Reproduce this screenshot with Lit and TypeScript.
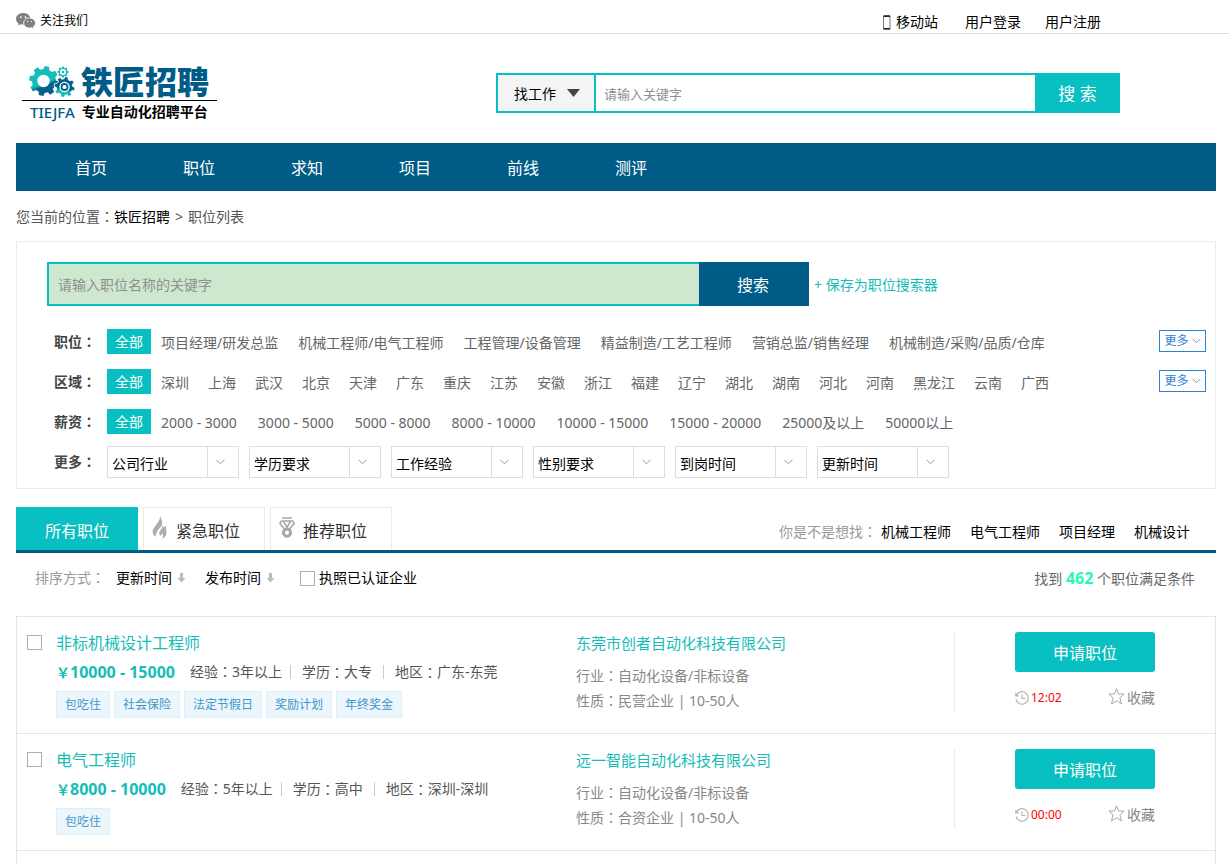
import { LitElement, html, css, svg } from "lit";
import { customElement, property } from "lit/decorators.js";

interface Job {
  title: string;
  salary: string;
  years: string;
  degree: string;
  area: string;
  tags: string[];
  company: string;
  industry: string;
  nature: string;
  time: string;
}

const NAV = ["首页", "职位", "求知", "项目", "前线", "测评"];

const FILTERS = [
  {
    label: "职位",
    kind: "roles",
    more: true,
    items: ["项目经理/研发总监", "机械工程师/电气工程师", "工程管理/设备管理", "精益制造/工艺工程师", "营销总监/销售经理", "机械制造/采购/品质/仓库"],
  },
  {
    label: "区域",
    kind: "areas",
    more: true,
    items: ["深圳", "上海", "武汉", "北京", "天津", "广东", "重庆", "江苏", "安徽", "浙江", "福建", "辽宁", "湖北", "湖南", "河北", "河南", "黑龙江", "云南", "广西"],
  },
  {
    label: "薪资",
    kind: "pay",
    more: false,
    items: ["2000 - 3000", "3000 - 5000", "5000 - 8000", "8000 - 10000", "10000 - 15000", "15000 - 20000", "25000及以上", "50000以上"],
  },
];

const SELECTS = ["公司行业", "学历要求", "工作经验", "性别要求", "到岗时间", "更新时间"];
const SUGGESTIONS = ["机械工程师", "电气工程师", "项目经理", "机械设计"];

const JOBS: Job[] = [
  {
    title: "非标机械设计工程师",
    salary: "10000 - 15000",
    years: "3年以上",
    degree: "大专",
    area: "广东-东莞",
    tags: ["包吃住", "社会保险", "法定节假日", "奖励计划", "年终奖金"],
    company: "东莞市创者自动化科技有限公司",
    industry: "自动化设备/非标设备",
    nature: "民营企业 | 10-50人",
    time: "12:02",
  },
  {
    title: "电气工程师",
    salary: "8000 - 10000",
    years: "5年以上",
    degree: "高中",
    area: "深圳-深圳",
    tags: ["包吃住"],
    company: "远一智能自动化科技有限公司",
    industry: "自动化设备/非标设备",
    nature: "合资企业 | 10-50人",
    time: "00:00",
  },
];

const shared = css`
  * {
    box-sizing: border-box;
  }
  a {
    color: inherit;
    text-decoration: none;
  }
  button,
  input,
  select {
    font: inherit;
    margin: 0;
    padding: 0;
    border: 0;
    border-radius: 0;
    outline: 0;
  }
  button {
    cursor: pointer;
  }
  svg {
    display: block;
    flex: none;
  }
  .colon {
    font-family: "Noto Sans CJK TC", sans-serif;
    line-height: 1;
  }
  .check {
    appearance: none;
    flex: none;
    width: 15px;
    height: 15px;
    border: 1px solid #adadad;
    background: #fff;
  }
  .check:checked {
    background: #08bfc1;
  }
`;

// The full-width colon sits in the middle of its box.
const colon = html`<span class="colon">：</span>`;

const chevron = html`<svg class="chevron" width="9" height="6" viewBox="0 0 9 6" fill="none" stroke="#999">
  <path d="M.5 .8 4.5 4.8 8.5 .8" />
</svg>`;

// Cog outline made of evenly spaced trapezoid teeth around a centre.
function cog(cx: number, cy: number, outer: number, inner: number, teeth: number, turn: number): string {
  const step = (Math.PI * 2) / teeth;
  const points: string[] = [];
  for (let i = 0; i < teeth; i++) {
    for (const [offset, radius] of [[-0.32, inner], [-0.2, outer], [0.2, outer], [0.32, inner]]) {
      const angle = turn + (i + offset) * step;
      points.push(`${(cx + Math.cos(angle) * radius).toFixed(2)},${(cy + Math.sin(angle) * radius).toFixed(2)}`);
    }
  }
  return points.join(" ");
}

const gears = html`<svg width="46" height="34" viewBox="0 0 46 34" aria-hidden="true">
  <defs>
    <linearGradient id="big" x1="0.3" y1="0" x2="0.7" y2="1">
      <stop offset="0.56" stop-color="#16bcb8" />
      <stop offset="0.66" stop-color="#07608b" />
    </linearGradient>
    <linearGradient id="mid" x1="0.6" y1="0" x2="0.4" y2="1">
      <stop offset="0.58" stop-color="#07608b" />
      <stop offset="0.7" stop-color="#16bcb8" />
    </linearGradient>
  </defs>
  ${svg`<polygon points=${cog(15, 16, 15, 12, 8, 0.2)} fill="url(#big)" />`}
  <circle cx="14.500" cy="16" r="6.200" fill="#fff" />
  ${svg`<polygon points=${cog(35.5, 22, 10.5, 8.2, 8, 0.2)} fill="url(#mid)" stroke="#fff" stroke-width=".8" />`}
  <circle cx="35.500" cy="22" r="5.200" fill="#fff" />
  <circle cx="35.500" cy="22" r="3" fill="none" stroke="#07608b" stroke-width="1.800" />
  ${svg`<polygon points=${cog(34, 7, 5.6, 4.4, 8, 0)} fill="#16bcb8" />`}
  <circle cx="34" cy="7" r="3" fill="#fff" />
  <circle cx="34" cy="7" r="1.300" fill="#16bcb8" />
</svg>`;

const wechat = html`<svg width="20" height="16" viewBox="0 0 20 16" aria-hidden="true">
  <path fill="#808080" d="M7.2 0C3.2 0 0 2.6 0 5.9c0 1.8 1 3.4 2.500 4.500L1.900 12.600l2.600-1.400c.9.300 1.700.4 2.700.4 4 0 7.200-2.600 7.200-5.800S11.200 0 7.200 0z" />
  <path fill="#808080" stroke="#fff" stroke-width=".8" d="M13.600 5c-3.300 0-6 2.200-6 5s2.700 5 6 5c.7 0 1.400-.1 2.100-.3l2.100 1.200-.6-1.900c1.400-.9 2.300-2.400 2.300-4 0-2.800-2.600-5-5.900-5z" />
  <circle cx="4.800" cy="4.200" r=".9" fill="#fff" />
  <circle cx="9.500" cy="4.200" r=".9" fill="#fff" />
  <circle cx="11.700" cy="8.600" r=".7" fill="#fff" />
  <circle cx="15.500" cy="8.600" r=".7" fill="#fff" />
</svg>`;

const phone = html`<svg width="9" height="15" viewBox="0 0 9 15" aria-hidden="true">
  <rect x="1.500" y=".6" width="6.500" height="13.800" rx=".6" fill="#fff" stroke="#777" />
  <path d="M1.500 1.200H8M1.500 13.600H8" stroke="#222" stroke-width="1.400" />
</svg>`;

const flame = html`<svg width="16" height="24" viewBox="0 0 16 24" aria-hidden="true">
  <path fill="#b0acab" d="M8 0c.4 3.200-1.600 6-4.200 9.200C1.300 12.200.2 14.600.8 17c.4 1.800 1.600 3 3.200 3.800-.3-3.600 1-6.200 4.400-9.200C10.300 9.800 10.700 7 9.900 4.600 9.400 3 8.600 1.600 8 0z" />
  <path fill="#b0acab" d="M10.600 9.500c.4 3-3.600 4.800-3.300 8.300.1 1 .5 1.500 1.200 1.600 1 .1 1.500-.8 1.600-2.400 1.400 1.900 1.200 4-.7 6 3.600-1.200 5.300-3.800 5.200-7-.1-2.700-1-4.200-.6-6.600-1.200.5-1.800 1.300-2 2.400-.2-1-.6-1.700-1.400-2.300z" />
</svg>`;

const medal = html`<svg width="16" height="21" viewBox="0 0 16 21" fill="none" stroke="#aaa7a5" aria-hidden="true">
  <path stroke-width="1.400" d="M3 1h10M2 4h12" />
  <path stroke-width="1.600" d="M2.200 4 .9 6.600l4.700 5.600M13.800 4l1.300 2.600-4.700 5.600M4.600 4.500 8 10.500l3.400-6" />
  <circle cx="8" cy="15.600" r="3.600" stroke-width="3" />
  <path stroke="#fff" d="M8 13.800v3.600" />
</svg>`;

const downArrow = html`<svg width="9" height="10" viewBox="0 0 9 10" aria-hidden="true">
  <path fill="#bbb" d="M3 0h3v5h2.500L4.500 9.500.5 5H3z" />
</svg>`;

const clock = html`<svg width="14" height="14" viewBox="0 0 14 14" fill="none" stroke="#b5b5b5" stroke-width="1.200" aria-hidden="true">
  <path d="M1.300 4.500A6.200 6.200 0 1 1 1 8.500M.8 1.800v3.100h3M7 3.500v4h3.500" />
</svg>`;

const star = html`<svg width="17" height="17" viewBox="0 0 17 17" fill="none" stroke="#aaa" aria-hidden="true">
  <path stroke-linejoin="round" d="M8.500 .8 10.500 6h5.600l-4.200 3.800 1.600 6.200-5-3.300-5 3.300 1.600-6.200L.9 6h5.600z" />
</svg>`;

@customElement("job-item")
export class JobItem extends LitElement {
  @property({ attribute: false }) job!: Job;

  static styles = [
    shared,
    css`
      :host {
        display: grid;
        grid-template-columns: 39px minmax(0, 520fr) minmax(0, 378fr) 261px;
        min-height: 117px;
        padding: 15px 0 14px;
        border-bottom: 1px solid #e5e5e5;
      }
      .pick {
        padding: 3px 0 0 10px;
      }
      .pick .check {
        display: block;
      }
      .title {
        display: block;
        font-size: 16px;
        line-height: 22px;
        color: #14bdb8;
      }
      .facts {
        display: flex;
        align-items: center;
        height: 24px;
        margin-top: 6px;
        color: #555;
        white-space: nowrap;
      }
      .salary {
        margin-right: 15px;
        color: #14bdb8;
        font-weight: 700;
        font-size: 16px;
      }
      .yen {
        font-size: 14px;
      }
      .fact + .fact {
        display: flex;
        align-items: center;
      }
      .fact + .fact::before {
        content: "";
        width: 1px;
        height: 14px;
        margin: 0 11px;
        background: #ccc;
      }
      .fact:nth-child(3)::before {
        margin-left: 8px;
      }
      .tags {
        display: flex;
        flex-wrap: wrap;
        gap: 4px;
        margin: 7px 0 0;
        padding: 0;
        list-style: none;
      }
      .tag {
        padding: 0 8px;
        border: 1px solid #dfeff8;
        background: #ecf6fd;
        color: #3f97c9;
        font-size: 12px;
        line-height: 25px;
      }
      .company {
        display: block;
        margin-bottom: 9px;
        font-size: 15px;
        line-height: 22px;
        color: #14bdb8;
      }
      .line {
        margin: 0;
        line-height: 25px;
        color: #888;
      }
      .actions {
        height: 80px;
        padding: 0 60px;
        border-left: 1px solid #ebebeb;
      }
      .apply {
        display: block;
        width: 100%;
        height: 40px;
        padding-top: 2px;
        border-radius: 3px;
        background: #08bfc1;
        color: #fff;
        font-size: 16px;
      }
      .meta {
        display: flex;
        justify-content: space-between;
        align-items: center;
        height: 20px;
        margin-top: 16px;
      }
      .when,
      .save {
        display: flex;
        align-items: center;
        gap: 2px;
      }
      .when {
        color: #f00;
        font-size: 12px;
      }
      .save {
        background: none;
        color: #888;
      }
      .save svg {
        margin-bottom: 4px;
      }
    `,
  ];

  render() {
    const j = this.job;
    return html`
      <div class="pick"><input class="check" type="checkbox" aria-label=${j.title} /></div>
      <div>
        <a class="title" href="#">${j.title}</a>
        <div class="facts">
          <span class="salary"><span class="yen">￥</span>${j.salary}</span>
          <span class="fact">经验${colon}${j.years}</span>
          <span class="fact">学历${colon}${j.degree}</span>
          <span class="fact">地区${colon}${j.area}</span>
        </div>
        <ul class="tags">
          ${j.tags.map((t) => html`<li class="tag">${t}</li>`)}
        </ul>
      </div>
      <div>
        <a class="company" href="#">${j.company}</a>
        <p class="line">行业${colon}${j.industry}</p>
        <p class="line">性质${colon}${j.nature}</p>
      </div>
      <div class="actions">
        <button class="apply" type="button">申请职位</button>
        <div class="meta">
          <span class="when">${clock}<span>${j.time}</span></span>
          <button class="save" type="button">${star}<span>收藏</span></button>
        </div>
      </div>
    `;
  }
}

@customElement("app-root")
export class AppRoot extends LitElement {
  static styles = [
    shared,
    css`
      :host {
        display: block;
        background: #fff;
        color: #000;
        font-family: "Noto Sans", "Noto Sans CJK SC", sans-serif;
        font-size: 14px;
        line-height: 20px;
      }
      .topbar {
        display: flex;
        justify-content: space-between;
        height: 34px;
        padding: 10px 128px 0 16px;
        border-bottom: 1px solid #ddd;
      }
      .follow {
        display: flex;
        align-items: center;
        gap: 4px;
        height: 22px;
        font-size: 12px;
      }
      .account {
        display: flex;
        align-items: center;
        height: 24px;
        gap: 24px;
      }
      .mobile {
        display: flex;
        align-items: center;
        gap: 5px;
        margin-right: 3px;
      }
      .wrap {
        padding: 0 13px 0 16px;
      }
      .header {
        display: flex;
        justify-content: space-between;
        align-items: flex-start;
        height: 109px;
        padding: 0 96px 0 6px;
      }
      .logo {
        width: 195px;
        padding-top: 30px;
      }
      .brand {
        display: flex;
        align-items: center;
        gap: 6px;
        height: 37px;
        padding-left: 7px;
        border-bottom: 1px solid #000;
        color: #005c87;
        font-size: 32px;
        font-weight: 900;
        line-height: 36px;
        white-space: nowrap;
      }
      .slogan {
        display: flex;
        align-items: center;
        gap: 7px;
        height: 22px;
        padding-left: 8px;
        font-weight: 700;
        white-space: nowrap;
      }
      .latin {
        color: #005c87;
        font-size: 15px;
        font-weight: 500;
      }
      .site-search {
        display: flex;
        flex: 0 1 624px;
        height: 40px;
        margin-top: 39px;
        border: 2px solid #08bfc1;
        border-right: 0;
      }
      .kind {
        display: grid;
        align-items: center;
        width: 98px;
        border-right: 2px solid #08bfc1;
        background: #f4f4f4;
      }
      .kind select {
        grid-area: 1 / 1;
        appearance: none;
        width: 100%;
        height: 100%;
        padding: 1px 0 0 16px;
        background: none;
        color: #000;
      }
      .kind svg {
        grid-area: 1 / 1;
        justify-self: end;
        margin-right: 14px;
        pointer-events: none;
      }
      .site-search input {
        flex: 1;
        min-width: 0;
        padding: 1px 8px 0;
        font-size: 13px;
      }
      ::placeholder {
        color: #8f8f8f;
        opacity: 1;
      }
      .go {
        width: 85px;
        margin: -2px 0;
        padding-top: 2px;
        background: #08bfc1;
        color: #fff;
        font-size: 17px;
      }
      .nav {
        display: flex;
        padding-left: 21px;
        background: #005c87;
        color: #fff;
        font-size: 16px;
        line-height: 48px;
      }
      .nav a {
        width: 108px;
        padding-top: 1px;
        height: 48px;
        text-align: center;
      }
      .crumbs {
        display: flex;
        height: 50px;
        padding-top: 16px;
        color: #555;
      }
      .crumbs a {
        color: #000;
      }
      .crumbs .sep {
        padding: 0 5px;
      }
      .filters {
        padding: 20px 9px 6px 30px;
        border: 1px solid #ebebeb;
      }
      .job-search {
        display: flex;
        align-items: center;
        margin-bottom: 16px;
      }
      .job-search input {
        flex: 0 1 652px;
        min-width: 0;
        height: 44px;
        padding: 0 9px;
        border: 2px solid #08bfc1;
        border-right: 0;
        background: #cde8cf;
      }
      .job-search button {
        width: 110px;
        height: 44px;
        padding: 2px 2px 0 0;
        background: #005c87;
        color: #fff;
        font-size: 16px;
      }
      .job-search a {
        margin-left: 5px;
        padding-top: 2px;
        color: #14bdb8;
      }
      .row {
        display: flex;
        align-items: center;
        height: 40px;
        padding-left: 7px;
      }
      .label {
        width: 53px;
        color: #444;
        font-weight: 700;
      }
      .all {
        margin: 0 10px 1px 0;
        padding: 1px 8px 0;
        background: #08bfc1;
        color: #fff;
        line-height: 24px;
      }
      .options {
        display: flex;
        flex: 1;
        padding-top: 1px;
        color: #666;
        white-space: nowrap;
      }
      .options.roles {
        gap: 20px;
      }
      .options.areas {
        gap: 19px;
      }
      .options.pay {
        gap: 21px;
      }
      .more {
        display: flex;
        align-items: center;
        justify-content: center;
        gap: 3px;
        width: 47px;
        height: 22px;
        margin-bottom: 2px;
        border: 1px solid #2e80d5;
        background: #fff;
        color: #2e80d5;
        font-size: 12px;
      }
      .selects {
        display: flex;
        gap: 10px;
      }
      .drop {
        display: grid;
        grid-template-columns: 1fr 31px;
        align-items: center;
        width: 132px;
        height: 32px;
        border: 1px solid #ddd;
      }
      .drop select {
        grid-area: 1 / 1 / 2 / 3;
        appearance: none;
        height: 30px;
        padding: 3px 0 0 4px;
        background: none;
        color: #000;
      }
      .arrow {
        grid-area: 1 / 2;
        display: grid;
        place-items: center start;
        height: 30px;
        padding-left: 8px;
        border-left: 1px solid #ddd;
        pointer-events: none;
      }
      .tabs {
        display: flex;
        gap: 5px;
        margin-top: 18px;
        border-bottom: 3px solid #005c87;
      }
      .tab {
        display: flex;
        align-items: center;
        gap: 8px;
        width: 122px;
        height: 43px;
        padding: 0 8px;
        border: 1px solid #ebebeb;
        border-bottom: 0;
        background: #fff;
        color: #333;
        font-size: 16px;
        white-space: nowrap;
      }
      .tab span {
        padding-top: 4px;
      }
      .tab svg {
        margin-bottom: 3px;
      }
      .tab.on {
        justify-content: center;
        border-color: #08bfc1;
        background: #08bfc1;
        color: #fff;
      }
      .hints {
        display: flex;
        gap: 19px;
        align-items: center;
        margin-left: auto;
        padding: 6px 26px 0 0;
      }
      .hints .ask {
        margin-right: -15px;
        color: #999;
      }
      .sort {
        display: flex;
        align-items: center;
        height: 50px;
        padding: 0 21px 0 19px;
      }
      .sort .by {
        margin-right: 11px;
        color: #999;
      }
      .order {
        display: flex;
        align-items: center;
        gap: 5px;
        margin-right: 19px;
        background: none;
        color: #000;
      }
      .licensed {
        display: flex;
        align-items: center;
        gap: 4px;
        margin-left: 6px;
      }
      .found {
        margin-left: auto;
        color: #666;
      }
      .found strong {
        color: #2cf5b8;
        font-size: 16px;
      }
      .list {
        margin-top: 13px;
        padding-bottom: 12px;
        border: 1px solid #e5e5e5;
        border-bottom: 0;
      }
    `,
  ];

  render() {
    return html`
      <div class="topbar">
        <a class="follow" href="#">${wechat}<span>关注我们</span></a>
        <div class="account">
          <a class="mobile" href="#">${phone}<span>移动站</span></a>
          <a href="#">用户登录</a>
          <a href="#">用户注册</a>
        </div>
      </div>
      <div class="wrap">
        <header class="header">
          <a class="logo" href="#">
            <div class="brand">${gears}<span>铁匠招聘</span></div>
            <div class="slogan"><span class="latin">TIEJFA</span><span>专业自动化招聘平台</span></div>
          </a>
          <form class="site-search" @submit=${(e: Event) => e.preventDefault()}>
            <div class="kind">
              <select aria-label="搜索类型">
                <option>找工作</option>
                <option>找人才</option>
              </select>
              <svg width="13" height="8" viewBox="0 0 13 8"><path fill="#444" d="M0 0h13L6.500 8z" /></svg>
            </div>
            <input type="text" placeholder="请输入关键字" aria-label="请输入关键字" />
            <button class="go">搜 索</button>
          </form>
        </header>

        <nav class="nav">${NAV.map((n) => html`<a href="#">${n}</a>`)}</nav>

        <div class="crumbs">
          <span>您当前的位置${colon}</span><a href="#">铁匠招聘</a><span class="sep">&gt;</span><span>职位列表</span>
        </div>

        <section class="filters">
          <form class="job-search" @submit=${(e: Event) => e.preventDefault()}>
            <input type="text" placeholder="请输入职位名称的关键字" aria-label="职位名称" />
            <button>搜索</button>
            <a href="#">+ 保存为职位搜索器</a>
          </form>
          ${FILTERS.map(
            (f) => html`<div class="row">
              <span class="label">${f.label}${colon}</span>
              <a class="all" href="#">全部</a>
              <div class="options ${f.kind}">${f.items.map((i) => html`<a href="#">${i}</a>`)}</div>
              ${f.more ? html`<button class="more" type="button"><span>更多</span>${chevron}</button>` : ""}
            </div>`
          )}
          <div class="row">
            <span class="label">更多${colon}</span>
            <div class="selects">
              ${SELECTS.map(
                (s) => html`<div class="drop">
                  <select aria-label=${s}>
                    <option>${s}</option>
                  </select>
                  <span class="arrow">${chevron}</span>
                </div>`
              )}
            </div>
          </div>
        </section>

        <div class="tabs">
          <button class="tab on" type="button"><span>所有职位</span></button>
          <button class="tab" type="button">${flame}<span>紧急职位</span></button>
          <button class="tab" type="button">${medal}<span>推荐职位</span></button>
          <div class="hints">
            <span class="ask">你是不是想找${colon}</span>
            ${SUGGESTIONS.map((s) => html`<a href="#">${s}</a>`)}
          </div>
        </div>

        <div class="sort">
          <span class="by">排序方式${colon}</span>
          <button class="order" type="button"><span>更新时间</span>${downArrow}</button>
          <button class="order" type="button"><span>发布时间</span>${downArrow}</button>
          <label class="licensed"><input class="check" type="checkbox" /><span>执照已认证企业</span></label>
          <span class="found">找到 <strong>462</strong> 个职位满足条件</span>
        </div>

        <div class="list">${JOBS.map((j) => html`<job-item .job=${j}></job-item>`)}</div>
      </div>
    `;
  }
}
